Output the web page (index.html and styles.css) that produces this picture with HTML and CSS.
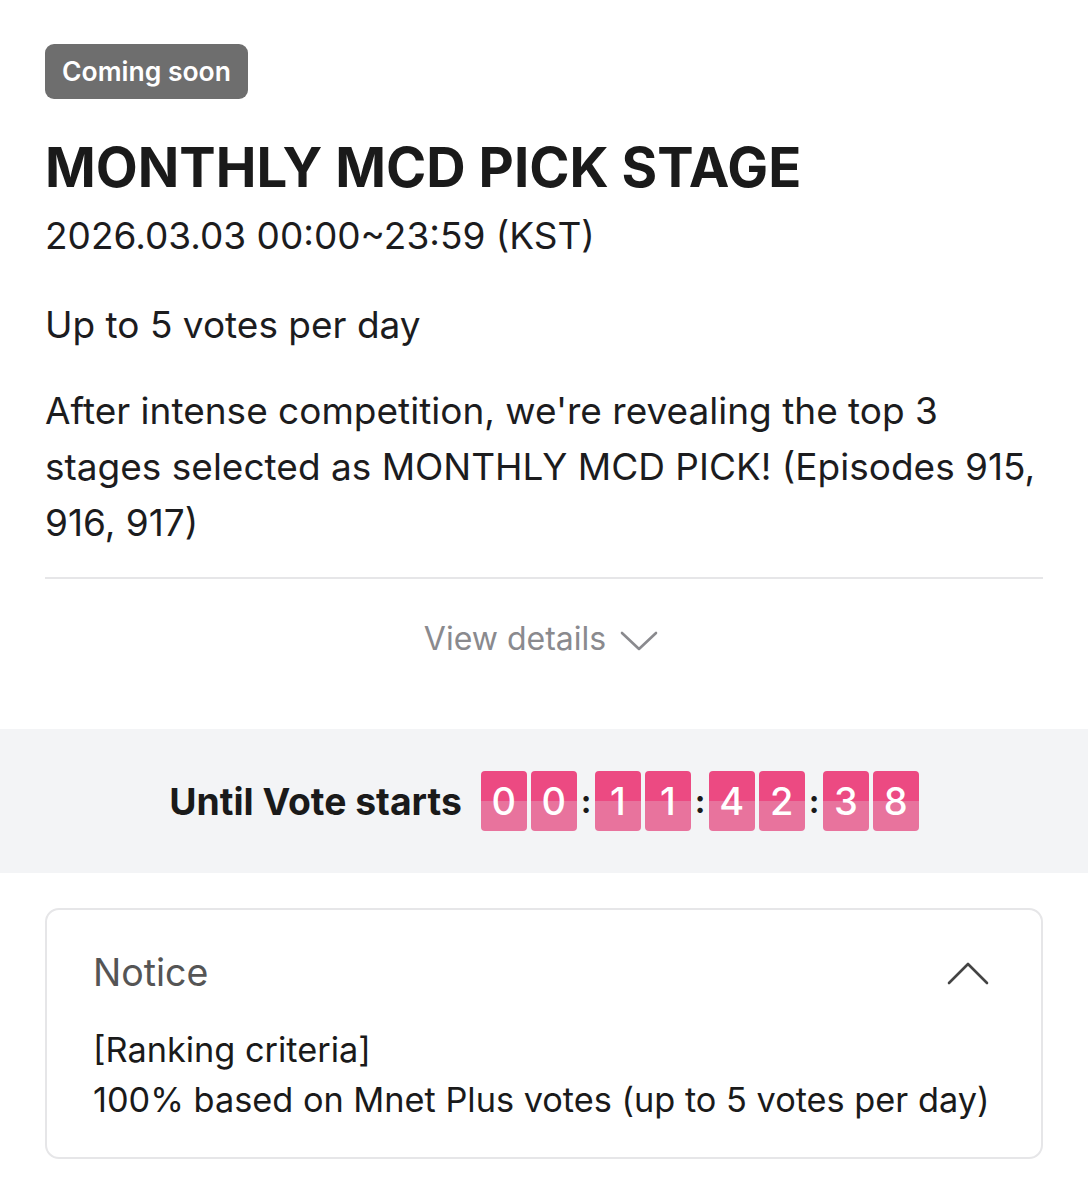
FILE: index.html
```html
<!DOCTYPE html>
<html lang="en">
<head>
  <meta charset="UTF-8" />
  <title>MONTHLY MCD PICK STAGE</title>
  <link rel="stylesheet" href="styles.css">
</head>
<body>
  <div class="info">
    <span class="badge">Coming soon</span>
    <h1 class="title">MONTHLY MCD PICK STAGE</h1>
    <p class="period">2026.03.03 00:00~23:59 (KST)</p>
    <p class="limit">Up to 5 votes per day</p>
    <p class="desc">After intense competition, we're revealing the top 3 stages selected as MONTHLY MCD PICK! (Episodes 915, 916, 917)</p>
    <div class="more">
      <span>View details</span>
      <svg width="38" height="24" viewBox="0 0 38 24"><path d="M2 4 L19 20 L36 4" fill="none" stroke="#8a8a8e" stroke-width="2.6" stroke-linecap="round" stroke-linejoin="round"/></svg>
    </div>
  </div>

  <div class="countdown">
    <span class="label">Until Vote starts</span>
    <div class="digits">
      <span class="digit">0</span><span class="digit">0</span>
      <span class="sep">:</span>
      <span class="digit">1</span><span class="digit">1</span>
      <span class="sep">:</span>
      <span class="digit">4</span><span class="digit">2</span>
      <span class="sep">:</span>
      <span class="digit">3</span><span class="digit">8</span>
    </div>
  </div>

  <div class="notice">
    <div class="notice-head">
      <span>Notice</span>
      <svg width="42" height="26" viewBox="0 0 42 26"><path d="M2 23 L21 4 L40 23" fill="none" stroke="#444" stroke-width="2.6" stroke-linecap="round" stroke-linejoin="round"/></svg>
    </div>
    <div class="notice-body">
      <p>[Ranking criteria]</p>
      <p>100% based on Mnet Plus votes (up to 5 votes per day)</p>
    </div>
  </div>
</body>
</html>
```

FILE: styles.css
```css
body {
  margin: 0;
  background: #fff;
  font-family: Inter, 'Noto Sans', sans-serif;
  color: #1c1c1e;
}

p {
  margin: 0;
}

.info {
  padding: 44px 45px 0;
}

.badge {
  display: inline-block;
  background: #6e6e6e;
  color: #fff;
  font-size: 26.5px;
  font-weight: 600;
  line-height: 55px;
  padding: 0 17px;
  border-radius: 9px;
}

.title {
  margin: 36px 0 0;
  font-size: 54.5px;
  font-weight: 700;
  line-height: 64px;
  color: #1a1a1a;
}

.period {
  margin-top: 15px;
  font-size: 37px;
  line-height: 44px;
}

.limit {
  margin-top: 43px;
  font-size: 37px;
  line-height: 48px;
}

.desc {
  margin-top: 34px;
  font-size: 37px;
  line-height: 56px;
}

.more {
  margin-top: 26px;
  border-top: 2px solid #e6e6e8;
  height: 152px;
  display: flex;
  justify-content: center;
  align-items: flex-start;
  gap: 14px;
  padding: 40px 6px 0 0;
  box-sizing: border-box;
  color: #8a8a8e;
  font-size: 32px;
}

.more svg {
  margin-top: 10px;
}

.countdown {
  background: #f3f4f6;
  height: 144px;
  display: flex;
  justify-content: center;
  align-items: center;
  gap: 19px;
}

.label {
  font-size: 37.3px;
  font-weight: 700;
  color: #1a1a1a;
}

.digits {
  display: flex;
  align-items: center;
  gap: 4px;
}

.digit {
  width: 46px;
  height: 60px;
  border-radius: 4px;
  background: linear-gradient(#ec4a82 50%, #e8739d 50%);
  color: #fff;
  font-size: 38px;
  font-weight: 500;
  display: flex;
  justify-content: center;
  align-items: center;
}

.sep {
  width: 10px;
  text-align: center;
  font-size: 32px;
  font-weight: 700;
  color: #1a1a1a;
}

.notice {
  margin: 35px 45px 0;
  border: 2px solid #e6e6e8;
  border-radius: 14px;
  padding: 40px 46px 32px;
}

.notice-head {
  display: flex;
  justify-content: space-between;
  align-items: center;
  font-size: 37.5px;
  color: #555;
}

.notice-head svg {
  margin-right: 6px;
}

.notice-body {
  margin-top: 30px;
  font-size: 34.3px;
  line-height: 50px;
  color: #1a1a1a;
  white-space: nowrap;
}
```
